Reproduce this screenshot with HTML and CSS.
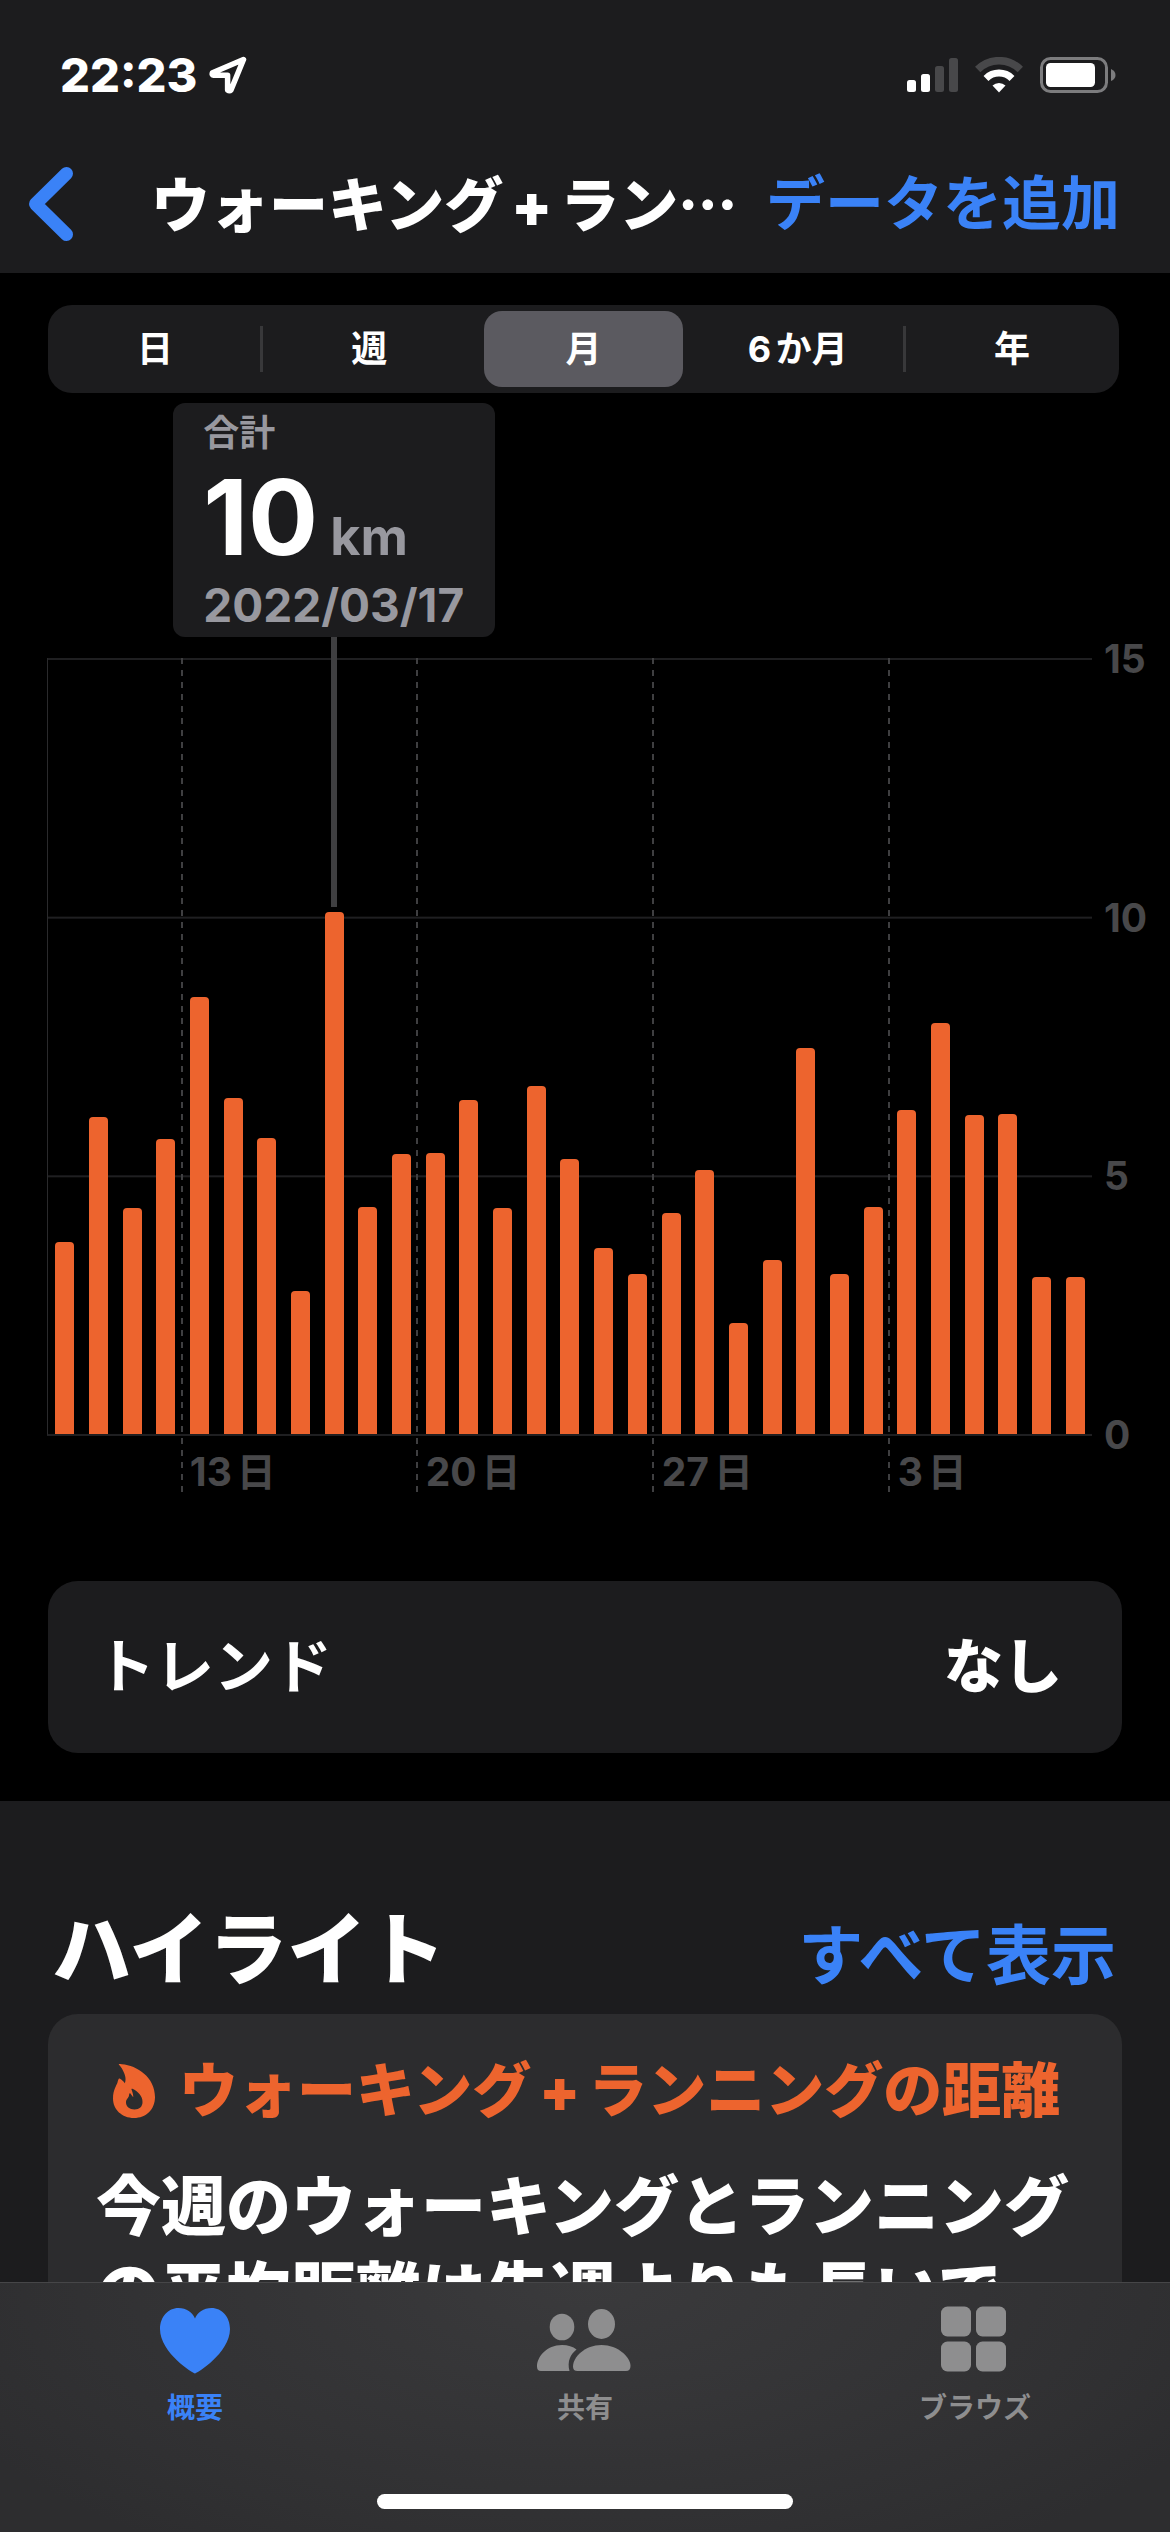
FILE: index.html
```html
<!DOCTYPE html>
<html lang="ja">
<head>
<meta charset="utf-8">
<meta name="viewport" content="width=device-width, initial-scale=1">
<title>ウォーキング+ランニングの距離</title>
<link rel="stylesheet" href="styles.css">
</head>
<body>
<div class="app">
  <header class="top">
    <div class="status">
      <div class="status-left">
        <time class="clock">22:23</time>
        <svg class="icon-location" viewBox="0 0 38 38" aria-hidden="true"><path d="M34.500 3.500 3.500 16.700Q2.500 19 4.500 19.200H18.600V34Q20.500 35.500 22 34Z" fill="none" stroke="#fff" stroke-width="5.500" stroke-linejoin="round"/></svg>
      </div>
      <div class="status-right">
        <svg class="icon-signal" viewBox="0 0 51 34" aria-hidden="true"><rect x="0" y="22" width="9" height="12" rx="2.500" fill="#fff"/><rect x="14" y="16" width="9" height="18" rx="2.500" fill="#fff"/><rect x="28" y="8" width="9" height="26" rx="2.500" fill="#48484a"/><rect x="42" y="0" width="9" height="34" rx="2.500" fill="#48484a"/></svg>
        <svg class="icon-wifi" viewBox="0 0 48 36" aria-hidden="true"><path d="M2.700 12.500a30 30 0 0 1 42.600 0" fill="none" stroke="#48484a" stroke-width="7.500"/><path d="M11 21.400a18.500 18.500 0 0 1 26 0" fill="none" stroke="#fff" stroke-width="7"/><path d="M17.500 28.500a9.500 9.500 0 0 1 13 0L24 35.500Z" fill="#fff"/></svg>
        <svg class="icon-battery" viewBox="0 0 76 36" aria-hidden="true"><rect x="1.500" y="1.500" width="65" height="33" rx="9" fill="none" stroke="#7c7c7e" stroke-width="3"/><rect x="6" y="6" width="49" height="24" rx="4.500" fill="#fff"/><path d="M71 12q4.500 2 4.500 6t-4.500 6Z" fill="#7c7c7e"/></svg>
      </div>
    </div>
    <nav class="navbar">
      <button class="back" type="button" aria-label="戻る"><svg class="icon-back" viewBox="0 0 44 74" aria-hidden="true"><path d="M37.500 6.500 6.500 37l31 30.500" fill="none" stroke="#3a82f7" stroke-width="13" stroke-linecap="round" stroke-linejoin="round"/></svg></button>
      <h1 class="title">ウォーキング<span class="plus">+</span>ラン…</h1>
      <button class="link-button add" type="button">データを追加</button>
    </nav>
  </header>

  <main class="content">
    <section class="chart-section">
      <fieldset class="segments" aria-label="期間">
        <label class="segment"><input type="radio" name="range"><span>日</span></label>
        <label class="segment"><input type="radio" name="range"><span>週</span></label>
        <label class="segment"><input type="radio" name="range" checked><span>月</span></label>
        <label class="segment"><input type="radio" name="range"><span>6か月</span></label>
        <label class="segment"><input type="radio" name="range"><span>年</span></label>
      </fieldset>

      <figure class="chart">
        <div class="plot">
          <div class="day"><div class="bar" style="--km:3.71"></div></div>
          <div class="day"><div class="bar" style="--km:6.12"></div></div>
          <div class="day"><div class="bar" style="--km:4.36"></div></div>
          <div class="day"><div class="bar" style="--km:5.71"></div></div>
          <div class="day week"><div class="bar" style="--km:8.44"></div></div>
          <div class="day"><div class="bar" style="--km:6.49"></div></div>
          <div class="day"><div class="bar" style="--km:5.73"></div></div>
          <div class="day"><div class="bar" style="--km:2.76"></div></div>
          <div class="day selected">
            <div class="bar" style="--km:10.1"></div>
            <div class="stem" style="--km:10.1"></div>
            <div class="tooltip">
              <div class="tip-label">合計</div>
              <div class="tip-reading"><span class="tip-value">10</span><span class="tip-unit">km</span></div>
              <div class="tip-date">2022/03/17</div>
            </div>
          </div>
          <div class="day"><div class="bar" style="--km:4.38"></div></div>
          <div class="day"><div class="bar" style="--km:5.42"></div></div>
          <div class="day week"><div class="bar" style="--km:5.44"></div></div>
          <div class="day"><div class="bar" style="--km:6.45"></div></div>
          <div class="day"><div class="bar" style="--km:4.36"></div></div>
          <div class="day"><div class="bar" style="--km:6.72"></div></div>
          <div class="day"><div class="bar" style="--km:5.31"></div></div>
          <div class="day"><div class="bar" style="--km:3.59"></div></div>
          <div class="day"><div class="bar" style="--km:3.09"></div></div>
          <div class="day week"><div class="bar" style="--km:4.27"></div></div>
          <div class="day"><div class="bar" style="--km:5.1"></div></div>
          <div class="day"><div class="bar" style="--km:2.14"></div></div>
          <div class="day"><div class="bar" style="--km:3.36"></div></div>
          <div class="day"><div class="bar" style="--km:7.47"></div></div>
          <div class="day"><div class="bar" style="--km:3.09"></div></div>
          <div class="day"><div class="bar" style="--km:4.38"></div></div>
          <div class="day week"><div class="bar" style="--km:6.27"></div></div>
          <div class="day"><div class="bar" style="--km:7.95"></div></div>
          <div class="day"><div class="bar" style="--km:6.16"></div></div>
          <div class="day"><div class="bar" style="--km:6.18"></div></div>
          <div class="day"><div class="bar" style="--km:3.03"></div></div>
          <div class="day"><div class="bar" style="--km:3.03"></div></div>
        </div>
        <div class="y-axis"><span>15</span><span>10</span><span>5</span><span>0</span></div>
        <div class="x-axis"><span class="first">13日</span><span>20日</span><span>27日</span><span class="last">3日</span></div>
      </figure>

      <button class="trend" type="button"><span class="trend-name">トレンド</span><span class="trend-value">なし</span></button>
    </section>

    <section class="highlights">
      <div class="section-head">
        <h2 class="section-title">ハイライト</h2>
        <a class="show-all" href="#all">すべて表示</a>
      </div>
      <article class="card">
        <h3 class="card-title">
          <svg class="icon-flame" viewBox="0 0 42 54" aria-hidden="true"><path fill="#ed642e" fill-rule="evenodd" d="M6 .8C5.200-.2 6.500 0 9 .2 24 1.500 42 13 42 33 42 45.500 33 54 21 54S0 45.500 0 34.500C0 26 3.500 21.500 4.500 18.500 5 16 5.800 14 6.600 14.600 9 16 10.500 17.500 11.800 19.200 12.800 17 12.900 13 11.300 9.500 10 6 8 3 6 .8ZM16 31.500C16.300 29.500 16.500 28.800 17.200 29.300L20.200 33.200C20.500 30.500 19 27 18.500 25.400 18.300 24.600 19 24.500 20 25 25 27.500 29.500 32 29.500 38 29.500 42.600 26.500 45.500 21.500 45.500S13 42.500 13 38.500C13 35 15.500 34 16 31.500Z"/></svg>
          <span>ウォーキング<span class="plus">+</span>ランニングの距離</span>
        </h3>
        <p class="card-text">今週のウォーキングとランニングの平均距離は先週よりも長いで</p>
      </article>
    </section>
  </main>

  <footer class="tabbar">
    <nav class="tabs">
      <a class="tab current" href="#summary" aria-current="page">
        <svg class="icon-tab" viewBox="0 0 96 68" aria-hidden="true"><path fill="currentColor" d="M48 67.500C46.500 67.500 13 47 13 23 13 11 21 2 31.500 2 39.500 2 45.500 6.500 48 12.500 50.500 6.500 56.500 2 64.500 2 75 2 83 11 83 23 83 47 49.500 67.500 48 67.500Z"/></svg>
        <span>概要</span>
      </a>
      <a class="tab" href="#sharing">
        <svg class="icon-tab" viewBox="0 0 96 68" aria-hidden="true"><g fill="currentColor"><ellipse cx="25" cy="21" rx="12.300" ry="13.300"/><ellipse cx="64.500" cy="18" rx="13.500" ry="15"/><path d="M25 39C31 39 36 40.500 39.500 43.500 33.500 48.500 30 55 32.500 65H4Q0 65 0 60.500C0 51 9.500 39 25 39Z"/><path d="M64.500 39C81 39 93.500 51 93.500 60Q93.500 65 89 65H40.500Q36 65 36 60.500C36 51 48 39 64.500 39Z"/></g></svg>
        <span>共有</span>
      </a>
      <a class="tab" href="#browse">
        <svg class="icon-tab" viewBox="0 0 96 68" aria-hidden="true"><g fill="currentColor"><rect x="14" y="0.500" width="30" height="30" rx="6.500"/><rect x="49" y="0.500" width="30" height="30" rx="6.500"/><rect x="14" y="35.500" width="30" height="30" rx="6.500"/><rect x="49" y="35.500" width="30" height="30" rx="6.500"/></g></svg>
        <span>ブラウズ</span>
      </a>
    </nav>
    <div class="home-indicator"></div>
  </footer>
</div>
</body>
</html>
```
FILE: styles.css
```css
:root {
  --blue: #3a82f7;
  --orange: #ed642e;
  --panel: #1c1c1e;
  --line: #1f1f21;
  --axis: #48484a;
  --muted: #98989f;
}

* {
  box-sizing: border-box;
}

body {
  margin: 0;
  background: #000;
  color: #fff;
  font-family: Inter, "Noto Sans CJK JP", sans-serif;
  text-autospace: normal;
}

h1, h2, h3, p, figure, fieldset {
  margin: 0;
  padding: 0;
  border: 0;
}

button {
  margin: 0;
  padding: 0;
  border: 0;
  background: none;
  color: inherit;
  font: inherit;
}

a {
  text-decoration: none;
}

svg {
  display: block;
  flex: none;
}

.app {
  display: flex;
  flex-direction: column;
  height: 100vh;
}

/* Status and navigation bars */
.top {
  flex: none;
  background: var(--panel);
}

.status {
  display: flex;
  align-items: center;
  justify-content: space-between;
  padding: 50px 54px 0 60px;
  height: 100px;
}

.status-left,
.status-right {
  display: flex;
  align-items: center;
}

.status-left {
  gap: 12px;
}

.status-right {
  gap: 17px;
}

.clock {
  font-size: 47px;
  line-height: 50px;
  font-weight: 800;
}

.icon-location {
  width: 38px;
  height: 38px;
}

.icon-signal {
  width: 51px;
  height: 34px;
}

.icon-wifi {
  width: 48px;
  height: 36px;
}

.icon-battery {
  width: 76px;
  height: 36px;
}

.navbar {
  display: flex;
  align-items: center;
  height: 173px;
  padding: 34px 50px 0 29px;
}

.icon-back {
  width: 44px;
  height: 74px;
}

.title {
  flex: 1;
  margin-left: 78px;
  font-family: "Noto Sans CJK JP", sans-serif;
  font-size: 59px;
  line-height: 60px;
  font-weight: 900;
  white-space: nowrap;
}

.plus {
  margin: 0 8px;
  font-family: Inter, sans-serif;
  font-weight: 900;
}

.link-button {
  color: var(--blue);
  font-size: 59px;
  line-height: 60px;
  font-weight: 700;
  white-space: nowrap;
}

/* Scrolling content */
.content {
  flex: 1;
  min-height: 0;
  overflow-y: auto;
  scrollbar-width: none;
}

.chart-section {
  padding: 32px 0 48px;
}

.segments {
  display: flex;
  height: 88px;
  margin: 0 51px 0 48px;
  border-radius: 24px;
  background: var(--panel);
}

.segment {
  display: flex;
  flex: 1;
  padding: 6px 8px;
  position: relative;
}

.segment input {
  position: absolute;
  opacity: 0;
}

.segment span {
  display: flex;
  flex: 1;
  align-items: center;
  justify-content: center;
  border-radius: 18px;
  font-size: 36px;
  line-height: 40px;
  font-weight: 700;
}

.segment input:checked + span {
  background: #5b5a60;
}

.segment:nth-child(2)::before,
.segment:nth-child(5)::before {
  content: "";
  position: absolute;
  left: -2px;
  top: 21px;
  bottom: 21px;
  width: 3px;
  background: #38383a;
}

.chart {
  display: grid;
  grid-template-columns: 1fr 78px;
  margin: 265px 0 0 47px;
}

.plot {
  display: grid;
  grid-template-columns: repeat(31, 1fr);
  height: 778px;
  border-left: 1px solid #2a2a2c;
  border-bottom: 2px solid var(--line);
  background: linear-gradient(var(--line) 2px, transparent 2px) 0 0 / 100% calc(100% / 3);
}

.day {
  position: relative;
  display: flex;
  align-items: flex-end;
  justify-content: center;
  min-width: 0;
}

.bar {
  flex: none;
  width: 19px;
  height: calc(var(--km) / 15 * 100%);
  border-radius: 4px 4px 0 0;
  background: var(--orange);
}

.week::before {
  content: "";
  position: absolute;
  left: -2px;
  top: 0;
  bottom: -58px;
  width: 2px;
  background: repeating-linear-gradient(#3f3f41 0 6px, transparent 6px 12px);
}

.stem {
  position: absolute;
  left: 50%;
  top: -21px;
  bottom: calc(var(--km) / 15 * 100% + 5px);
  width: 6px;
  margin-left: -3px;
  background: #3f3f41;
}

.tooltip {
  position: absolute;
  left: 50%;
  bottom: calc(100% + 21px);
  width: 322px;
  height: 234px;
  margin-left: -161px;
  padding: 8px 0 0 30px;
  border-radius: 12px;
  background: var(--panel);
  color: var(--muted);
  font-weight: 700;
}

.tip-label {
  font-size: 36px;
  line-height: 44px;
}

.tip-reading {
  display: flex;
  align-items: baseline;
  gap: 12px;
  height: 112px;
  margin-top: 6px;
  line-height: 112px;
}

.tip-value {
  color: #fff;
  font-size: 104px;
}

.tip-unit {
  font-size: 52px;
}

.tip-date {
  margin-top: 6px;
  font-size: 46px;
  line-height: 52px;
}

.y-axis {
  display: flex;
  flex-direction: column;
  justify-content: space-between;
  margin: -19px 0;
  padding-left: 12px;
}

.y-axis,
.x-axis {
  color: var(--axis);
  font-size: 39px;
  line-height: 40px;
  font-weight: 700;
}

.x-axis {
  display: grid;
  grid-template-columns: repeat(31, 1fr);
  padding-top: 16px;
}

.x-axis span {
  grid-column-end: span 7;
  padding-left: 8px;
  white-space: nowrap;
}

.x-axis .first {
  grid-column: 5 / span 7;
}

.x-axis .last {
  grid-column-end: span 6;
}

.trend {
  display: flex;
  align-items: center;
  justify-content: space-between;
  width: calc(100% - 96px);
  height: 172px;
  margin: 89px 48px 0;
  padding: 0 60px 0 48px;
  border-radius: 30px;
  background: var(--panel);
  font-size: 59px;
  line-height: 60px;
}

.trend-name {
  font-weight: 700;
}

.trend-value {
  font-weight: 900;
}

.highlights {
  padding: 105px 48px 48px;
  background: var(--panel);
}

.section-head {
  display: flex;
  align-items: baseline;
  justify-content: space-between;
  padding: 0 6px 0 4px;
}

.section-title {
  font-size: 79px;
  line-height: 88px;
  font-weight: 900;
}

.show-all {
  color: var(--blue);
  font-size: 65px;
  line-height: 88px;
  font-weight: 700;
}

.card {
  margin-top: 14px;
  padding: 47px 48px;
  border-radius: 30px;
  background: #2c2c2e;
}

.card-title {
  display: flex;
  align-items: center;
  gap: 24px;
  padding-left: 17px;
  color: var(--orange);
  font-size: 59px;
  line-height: 60px;
  font-weight: 900;
  white-space: nowrap;
}

.icon-flame {
  width: 42px;
  height: 54px;
}

.card-text {
  margin-top: 43px;
  font-size: 65px;
  line-height: 86px;
  font-weight: 900;
}

/* Tab bar */
.tabbar {
  display: flex;
  flex: none;
  flex-direction: column;
  justify-content: space-between;
  height: 250px;
  padding: 23px 0;
  border-top: 1px solid #464648;
  background: radial-gradient(ellipse 60% 130% at 50% 0, #3a3a3c, #303032 80%, #2d2d2f);
}

.tabs {
  display: grid;
  grid-template-columns: repeat(3, 1fr);
}

.tab {
  display: flex;
  flex-direction: column;
  align-items: center;
  gap: 18px;
  color: #8e8e8f;
  font-size: 28px;
  line-height: 32px;
  font-weight: 700;
}

.tab.current {
  color: var(--blue);
}

.icon-tab {
  width: 96px;
  height: 68px;
}

.home-indicator {
  align-self: center;
  width: 416px;
  height: 15px;
  border-radius: 8px;
  background: #fff;
}
```
